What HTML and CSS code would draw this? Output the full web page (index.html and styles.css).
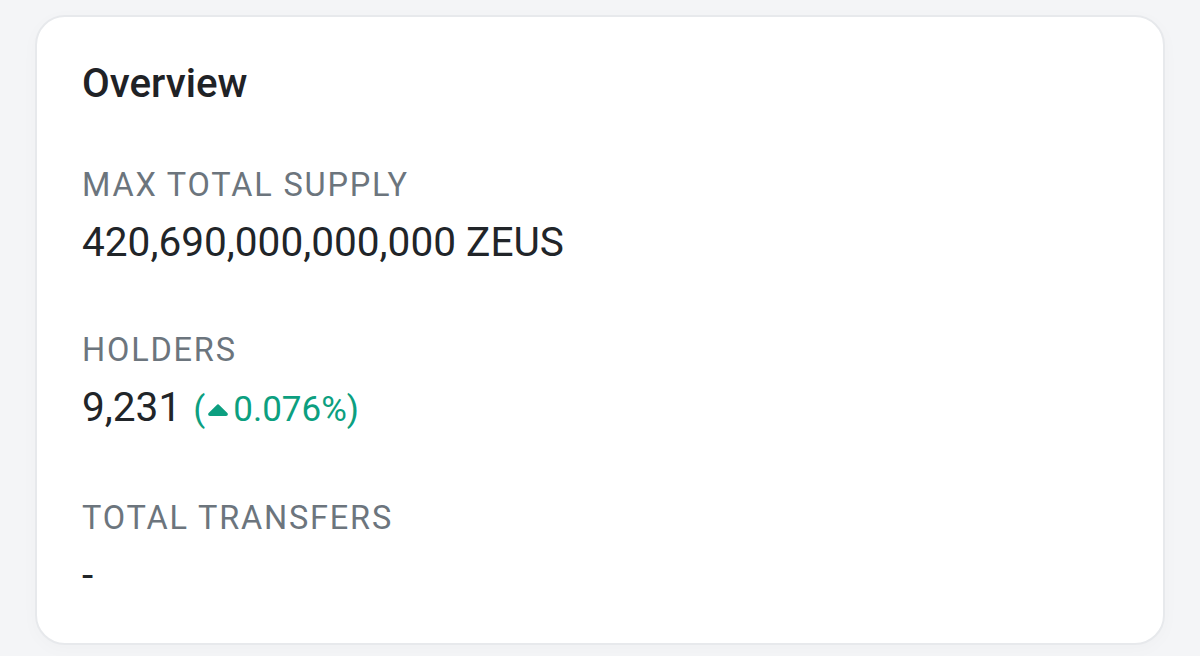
FILE: index.html
```html
<!DOCTYPE html>
<html lang="en">
<head>
<meta charset="utf-8">
<title>Overview</title>
<link rel="stylesheet" href="styles.css">
</head>
<body>
<section class="card">
  <h2 class="card-title">Overview</h2>
  <div class="stat">
    <div class="stat-label">MAX TOTAL SUPPLY</div>
    <div class="stat-value">420,690,000,000,000 ZEUS</div>
  </div>
  <div class="stat">
    <div class="stat-label">HOLDERS</div>
    <div class="stat-value">9,231 <span class="change">(<svg class="caret" viewBox="0 0 24 13" aria-hidden="true"><path d="M10.4 1.2 a2.2 2.2 0 0 1 3.2 0 l8.6 8.6 c1.1 1.2 0.3 3.2 -1.4 3.2 h-17.6 c-1.7 0 -2.5 -2 -1.4 -3.2 z"/></svg>0.076%)</span></div>
  </div>
  <div class="stat">
    <div class="stat-label">TOTAL TRANSFERS</div>
    <div class="stat-value">-</div>
  </div>
</section>
</body>
</html>
```

FILE: styles.css
```css
html, body {
  margin: 0;
  padding: 0;
}
body {
  background: #f4f5f7;
  padding: 15px 35px 0;
  font-family: Roboto, "Liberation Sans", Arial, sans-serif;
  color: #212529;
  height: 656px;
  box-sizing: border-box;
  overflow: hidden;
}
.card {
  background: #ffffff;
  border: 2px solid #e7e9ec;
  border-radius: 30px;
  padding: 43px 45px 48px;
  box-shadow: 0 4px 18px rgba(0, 0, 0, 0.025);
  height: 630px;
  box-sizing: border-box;
}
.card-title {
  margin: 0;
  font-size: 40.3px;
  line-height: 48px;
  font-weight: 500;
  color: #1f2226;
}
.stat {
  margin-top: 64px;
}
.card-title + .stat {
  margin-top: 57px;
}
.stat-label {
  font-size: 32.5px;
  line-height: 40px;
  color: #6c757d;
  letter-spacing: 1.8px;
  margin-bottom: 13px;
}
.stat-value {
  font-size: 40.6px;
  line-height: 48px;
  color: #212529;
}
.change {
  color: #0c9f80;
  font-size: 35px;
  margin-left: 2px;
}
.caret {
  width: 22px;
  height: 12px;
  fill: #0c9f80;
  margin: 0 4px 0 2px;
  vertical-align: 5px;
}
```
